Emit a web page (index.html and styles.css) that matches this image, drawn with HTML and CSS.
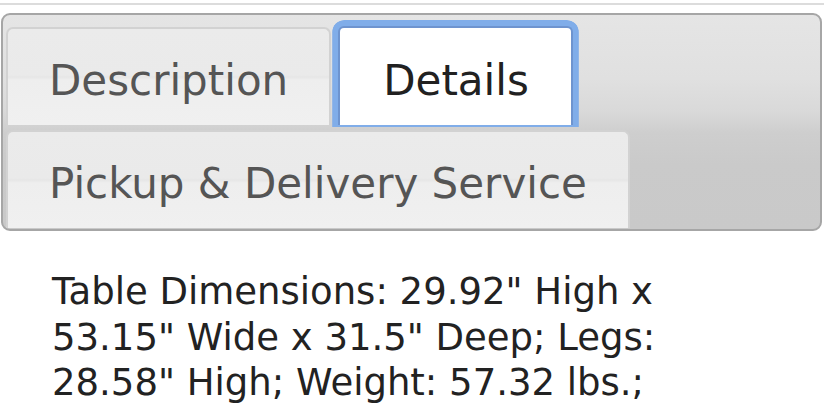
FILE: index.html
```html
<!DOCTYPE html>
<html>
<head>
<meta charset="utf-8">
<link rel="stylesheet" href="styles.css">
</head>
<body>
<div class="topline"></div>
<div class="tabs">
  <ul class="tablist">
    <li class="tab">Description</li>
    <li class="tab active">Details</li>
    <li class="tab">Pickup &amp; Delivery Service</li>
  </ul>
</div>
<div class="panel">
  <p class="details-text">Table Dimensions: 29.92" High x 53.15" Wide x 31.5" Deep; Legs: 28.58" High; Weight: 57.32 lbs.;</p>
</div>
</body>
</html>
```

FILE: styles.css
```css
html, body {
  margin: 0;
  padding: 0;
  background: #ffffff;
}

body {
  font-family: "DejaVu Sans", Verdana, sans-serif;
  width: 824px;
  height: 406px;
  overflow: hidden;
}

.topline {
  height: 2px;
  margin-top: 3px;
  background: #dcdcdc;
}

.tabs {
  margin: 8px 2px 0 1px;
  border: 2px solid #a6a6a6;
  border-radius: 9px;
  background: linear-gradient(to bottom, #e5e5e5 0%, #e0e0e0 30%, #d9d9d9 45%, #cecece 55%, #cacaca 70%, #c9c9c9 100%);
  padding: 11px 3px 1px 3px;
}

.tablist {
  list-style: none;
  margin: 0;
  padding: 0;
  display: flex;
  flex-wrap: wrap;
  align-items: flex-end;
  column-gap: 7px;
  row-gap: 5px;
}

.tab {
  font-size: 42px;
  line-height: 49px;
  color: #555555;
  padding: 27px 41px 20px 41px;
  border: 2px solid #d2d2d2;
  border-bottom: 0;
  border-radius: 7px 7px 0 0;
  background: linear-gradient(to bottom, #ebebeb 0%, #eaeaea 48%, #e6e6e6 50%, #eeeeee 53%, #f0f0f0 100%);
  white-space: nowrap;
}

.tab.active {
  color: #212121;
  background: #ffffff;
  border-color: #6e94cf;
  padding: 28px 42px 20px 43px;
  box-shadow: 0 0 0 6px #80ade9;
  clip-path: inset(-6px -6px -2px -6px round 12px 12px 0 0);
  border-radius: 6px 6px 0 0;
}

.panel {
  padding: 0 0 0 52px;
}

.details-text {
  margin: 38px 0 0 0;
  width: 620px;
  font-size: 37px;
  line-height: 45.5px;
  color: #222222;
}
```
